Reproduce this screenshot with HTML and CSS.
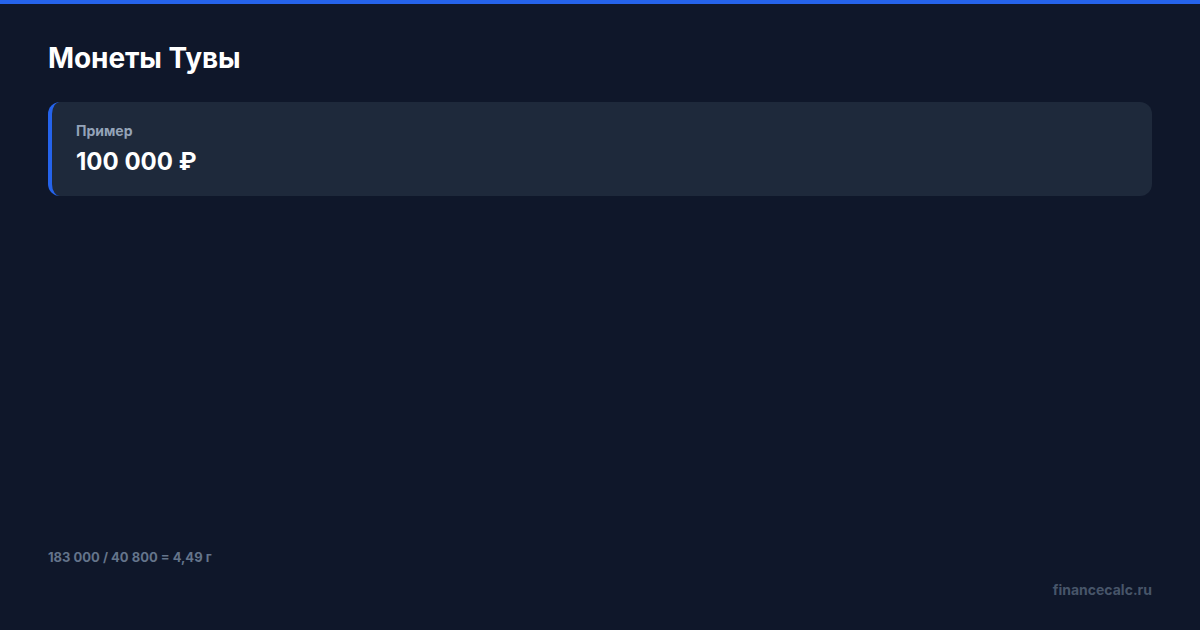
FILE: index.html
```html
<!DOCTYPE html>
<html lang="ru">
<head>
<meta charset="utf-8">
<title>Монеты Тувы</title>
<link rel="stylesheet" href="styles.css">
</head>
<body>
<div class="page">
  <main class="content">
    <h1 class="title">Монеты Тувы</h1>
    <div class="card">
      <div class="card-label">Пример</div>
      <div class="card-value">100 000 ₽</div>
    </div>
  </main>
  <p class="formula">183 000 / 40 800 = 4,49 г</p>
  <footer class="footer">
    <span class="brand">financecalc.ru</span>
  </footer>
</div>
</body>
</html>
```
FILE: styles.css
```css
* { box-sizing: border-box; }

html, body {
  margin: 0;
  width: 1200px;
  height: 630px;
  background: #0f172a;
  font-family: Inter, "Noto Sans", sans-serif;
  overflow: hidden;
}

.page {
  height: 630px;
  border-top: 4px solid #2563eb;
  padding: 36px 48px 32px;
  display: flex;
  flex-direction: column;
}

.content { flex: 1; }

.title {
  margin: 0 0 26px;
  font-size: 28px;
  line-height: 36px;
  font-weight: 700;
  color: #ffffff;
  letter-spacing: -0.1px;
}

.card {
  background: #1e293b;
  border-left: 4px solid #2563eb;
  border-radius: 12px;
  padding: 21px 24px 20px;
}

.card-label {
  font-size: 14px;
  line-height: 16px;
  font-weight: 700;
  color: #94a3b8;
  margin-bottom: 8px;
}

.card-value {
  font-size: 24px;
  line-height: 29px;
  font-weight: 700;
  color: #ffffff;
}

.formula {
  margin: 0 0 16px;
  font-size: 13px;
  line-height: 16px;
  font-weight: 700;
  color: #64748b;
}

.footer {
  display: flex;
  justify-content: flex-end;
}

.brand {
  font-size: 14px;
  line-height: 17px;
  font-weight: 700;
  color: #475569;
}
```
